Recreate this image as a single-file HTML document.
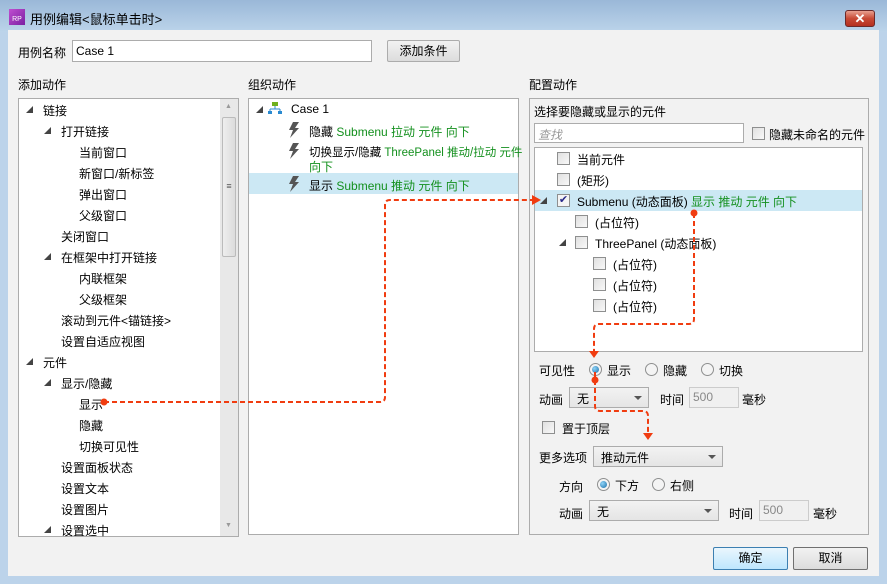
<!DOCTYPE html>
<html><head><meta charset="utf-8"><style>
*{box-sizing:border-box;margin:0;padding:0}
body{width:887px;height:584px;overflow:hidden;font-family:"Liberation Sans","Noto Sans CJK SC",sans-serif;font-size:12px;color:#000;background:#bcd3ea;position:relative}
.a{position:absolute;white-space:nowrap}
.box{position:absolute;background:#fff;border:1px solid #acacac}
.g{color:#14901e}
.cb{position:absolute;width:13px;height:13px;border:1px solid #8e8f8f;background:linear-gradient(135deg,#e0e0e0,#f8f8f8)}
.tri{position:absolute;width:0;height:0;border-left:7px solid transparent;border-bottom:7px solid #444}
.rad{position:absolute;width:13px;height:13px;border-radius:50%;border:1px solid #8e8f8f;background:#f4f4f4}
.rad.on::after{content:"";position:absolute;left:2px;top:2px;width:7px;height:7px;border-radius:50%;background:radial-gradient(circle at 35% 35%,#8fd3f7,#1a6fa8)}
.sel{position:absolute;border:1px solid #acacac;background:linear-gradient(#f2f2f2,#e5e5e5);padding:2px 7px;height:21px}
.sel::after{content:"";position:absolute;right:6px;top:8px;border-left:4px solid transparent;border-right:4px solid transparent;border-top:4px solid #555}
.inp{position:absolute;border:1px solid #ccc;background:#f0f0f0;color:#888;padding:2px 3px;height:21px}
.btn{position:absolute;border:1px solid #707070;border-radius:2px;background:linear-gradient(#f2f2f2,#dcdcdc);text-align:center;line-height:20px}
</style></head><body>
<div class="a" style="left:0;top:0;width:887px;height:32px;background:linear-gradient(#9ab8d8,#bcd4ea)"></div>
<div class="a" style="left:9px;top:9px;width:16px;height:16px;background:linear-gradient(135deg,#c04ed0,#7b1fa2);color:#fff;font-size:7px;line-height:22px;text-align:center">RP</div>
<div class="a" style="left:30px;top:9px;font-size:13px">用例编辑&lt;鼠标单击时&gt;</div>
<div class="a" style="left:845px;top:10px;width:30px;height:17px;border:1px solid #6b2a2a;border-radius:3px;background:linear-gradient(#e8a090,#c84a36 50%,#b53020);color:#fff;font-weight:bold;text-align:center;line-height:15px;font-size:13px">✕</div>
<div class="a" style="left:8px;top:30px;width:871px;height:546px;background:#f2f2f2"></div>

<div class="a" style="left:18px;top:44px">用例名称</div>
<div class="a" style="left:72px;top:40px;width:300px;height:22px;border:1px solid #acacac;background:#fff;padding:3px 3px">Case 1</div>
<div class="btn" style="left:387px;top:40px;width:73px;height:22px;border-color:#acacac">添加条件</div>

<div class="a" style="left:18px;top:76px">添加动作</div>
<div class="a" style="left:248px;top:76px">组织动作</div>
<div class="a" style="left:529px;top:76px">配置动作</div>

<div class="box" style="left:18px;top:98px;width:221px;height:439px"></div>
<div class="a" style="left:220px;top:99px;width:18px;height:437px;background:#e8e8e8"></div>
<div class="a" style="left:222px;top:117px;width:14px;height:140px;background:linear-gradient(90deg,#eee,#dcdcdc);border:1px solid #bbb;border-radius:2px;text-align:center;line-height:136px;font-size:9px;color:#555">≡</div>
<div class="a" style="left:225px;top:103px;font-size:7px;color:#999">▲</div>
<div class="a" style="left:225px;top:522px;font-size:7px;color:#999">▼</div>
<div class="tri" style="left:26px;top:106px"></div><div class="a" style="left:43px;top:102px">链接</div>
<div class="tri" style="left:44px;top:127px"></div><div class="a" style="left:61px;top:123px">打开链接</div>
<div class="a" style="left:79px;top:144px">当前窗口</div>
<div class="a" style="left:79px;top:165px">新窗口/新标签</div>
<div class="a" style="left:79px;top:186px">弹出窗口</div>
<div class="a" style="left:79px;top:207px">父级窗口</div>
<div class="a" style="left:61px;top:228px">关闭窗口</div>
<div class="tri" style="left:44px;top:253px"></div><div class="a" style="left:61px;top:249px">在框架中打开链接</div>
<div class="a" style="left:79px;top:270px">内联框架</div>
<div class="a" style="left:79px;top:291px">父级框架</div>
<div class="a" style="left:61px;top:312px">滚动到元件&lt;锚链接&gt;</div>
<div class="a" style="left:61px;top:333px">设置自适应视图</div>
<div class="tri" style="left:26px;top:358px"></div><div class="a" style="left:43px;top:354px">元件</div>
<div class="tri" style="left:44px;top:379px"></div><div class="a" style="left:61px;top:375px">显示/隐藏</div>
<div class="a" style="left:79px;top:396px">显示</div>
<div class="a" style="left:79px;top:417px">隐藏</div>
<div class="a" style="left:79px;top:438px">切换可见性</div>
<div class="a" style="left:61px;top:459px">设置面板状态</div>
<div class="a" style="left:61px;top:480px">设置文本</div>
<div class="a" style="left:61px;top:501px">设置图片</div>
<div class="tri" style="left:44px;top:526px"></div><div class="a" style="left:61px;top:522px">设置选中</div>

<div class="box" style="left:248px;top:98px;width:271px;height:437px"></div>
<div class="tri" style="left:256px;top:106px"></div>
<svg class="a" style="left:268px;top:101px" width="14" height="14"><rect x="4" y="1" width="6" height="4" fill="#6fb01e"/><path d="M7 5v3M2 8h10M2 8v2M12 8v2" stroke="#2a8ad0" fill="none"/><rect x="0" y="10" width="4" height="3" fill="#2a8ad0"/><rect x="10" y="10" width="4" height="3" fill="#2a8ad0"/></svg>
<div class="a" style="left:291px;top:102px">Case 1</div>
<div class="a" style="left:249px;top:173px;width:269px;height:21px;background:#cce8f4"></div>
<svg class="a" style="left:288px;top:122px" width="12" height="16"><path d="M5 0h6L7 6h4L2 16l3-8H1z" fill="#555"/></svg>
<div class="a" style="left:309px;top:123px">隐藏 <span class="g">Submenu 拉动 元件 向下</span></div>
<svg class="a" style="left:288px;top:143px" width="12" height="16"><path d="M5 0h6L7 6h4L2 16l3-8H1z" fill="#555"/></svg>
<div class="a" style="left:309px;top:144px;font-size:11.5px">切换显示/隐藏 <span class="g">ThreePanel 推动/拉动 元件</span></div>
<div class="a g" style="left:309px;top:158px">向下</div>
<svg class="a" style="left:288px;top:176px" width="12" height="16"><path d="M5 0h6L7 6h4L2 16l3-8H1z" fill="#555"/></svg>
<div class="a" style="left:309px;top:177px">显示 <span class="g">Submenu 推动 元件 向下</span></div>

<div class="a" style="left:529px;top:98px;width:340px;height:437px;border:1px solid #acacac"></div>
<div class="a" style="left:534px;top:103px">选择要隐藏或显示的元件</div>
<div class="a" style="left:534px;top:123px;width:210px;height:20px;border:1px solid #acacac;background:#fff;padding:2px 3px;color:#999;font-style:italic">查找</div>
<div class="cb" style="left:752px;top:127px"></div><div class="a" style="left:769px;top:126px">隐藏未命名的元件</div>
<div class="box" style="left:534px;top:147px;width:329px;height:205px"></div>
<div class="cb" style="left:557px;top:152px"></div><div class="a" style="left:577px;top:151px">当前元件</div>
<div class="cb" style="left:557px;top:173px"></div><div class="a" style="left:577px;top:172px">(矩形)</div>
<div class="a" style="left:535px;top:190px;width:327px;height:21px;background:#cce8f4"></div>
<div class="tri" style="left:540px;top:197px"></div>
<div class="cb" style="left:557px;top:194px;background:#f4f4f4;color:#2a2a8a;font-size:11px;line-height:11px;text-align:center">✔</div>
<div class="a" style="left:577px;top:193px">Submenu (动态面板) <span class="g">显示 推动 元件 向下</span></div>
<div class="cb" style="left:575px;top:215px"></div><div class="a" style="left:595px;top:214px">(占位符)</div>
<div class="tri" style="left:559px;top:239px"></div>
<div class="cb" style="left:575px;top:236px"></div><div class="a" style="left:595px;top:235px">ThreePanel (动态面板)</div>
<div class="cb" style="left:593px;top:257px"></div><div class="a" style="left:613px;top:256px">(占位符)</div>
<div class="cb" style="left:593px;top:278px"></div><div class="a" style="left:613px;top:277px">(占位符)</div>
<div class="cb" style="left:593px;top:299px"></div><div class="a" style="left:613px;top:298px">(占位符)</div>

<div class="a" style="left:539px;top:362px">可见性</div>
<div class="rad on" style="left:589px;top:363px"></div><div class="a" style="left:607px;top:362px">显示</div>
<div class="rad" style="left:645px;top:363px"></div><div class="a" style="left:663px;top:362px">隐藏</div>
<div class="rad" style="left:701px;top:363px"></div><div class="a" style="left:719px;top:362px">切换</div>
<div class="a" style="left:539px;top:391px">动画</div>
<div class="sel" style="left:569px;top:387px;width:80px">无</div>
<div class="a" style="left:660px;top:391px">时间</div>
<div class="inp" style="left:689px;top:387px;width:50px">500</div>
<div class="a" style="left:742px;top:391px">毫秒</div>
<div class="cb" style="left:542px;top:421px"></div><div class="a" style="left:562px;top:420px">置于顶层</div>
<div class="a" style="left:539px;top:449px">更多选项</div>
<div class="sel" style="left:593px;top:446px;width:130px;height:21px">推动元件</div>
<div class="a" style="left:559px;top:478px">方向</div>
<div class="rad on" style="left:597px;top:478px"></div><div class="a" style="left:615px;top:477px">下方</div>
<div class="rad" style="left:652px;top:478px"></div><div class="a" style="left:670px;top:477px">右侧</div>
<div class="a" style="left:559px;top:505px">动画</div>
<div class="sel" style="left:589px;top:500px;width:130px">无</div>
<div class="a" style="left:729px;top:505px">时间</div>
<div class="inp" style="left:759px;top:500px;width:50px">500</div>
<div class="a" style="left:813px;top:505px">毫秒</div>

<div class="btn" style="left:713px;top:547px;width:75px;height:23px;border-color:#3c7fb1;background:linear-gradient(#eaf6fd,#bee6fd)">确定</div>
<div class="btn" style="left:793px;top:547px;width:75px;height:23px">取消</div>

<svg class="a" style="left:0;top:0" width="887" height="584" fill="none">
<g stroke="#f03c10" stroke-width="2" stroke-dasharray="5,3">
<path d="M104 402H380q5 0 5-5V205q0-5 5-5H532"/>
<path d="M694 213V319q0 5-5 5H599q-5 0-5 5V352"/>
<path d="M595 372V406q0 5 5 5H643q5 0 5 5V434"/>
</g>
<g fill="#f03c10">
<circle cx="104" cy="402" r="3.5"/><circle cx="694" cy="213" r="3.5"/><circle cx="595" cy="380" r="3.5"/>
<path d="M532 195L541 200L532 205z"/><path d="M589 351L594 358L599 351z"/><path d="M643 433L648 440L653 433z"/>
</g></svg>
</body></html>
